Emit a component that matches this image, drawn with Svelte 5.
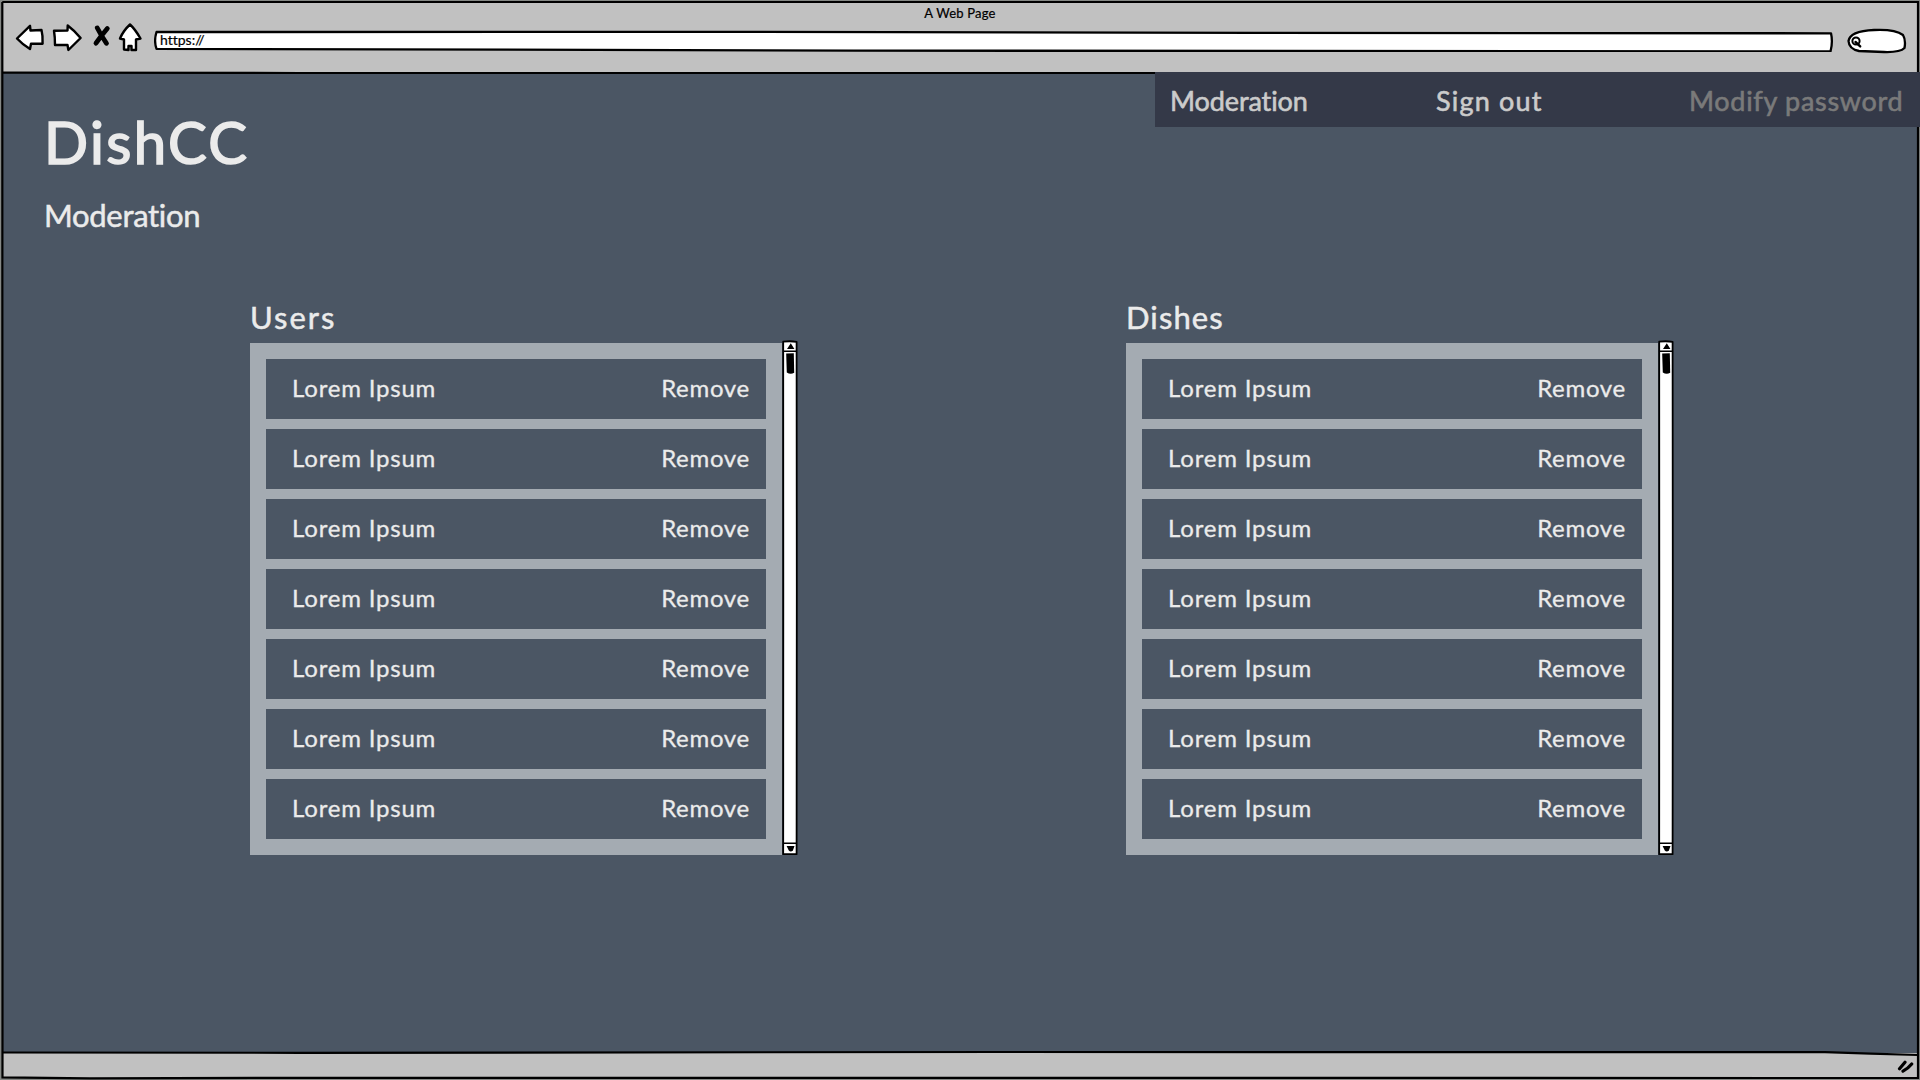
<script>
  const lists = ['Users', 'Dishes'];
  const rows = Array.from({ length: 7 }, () => 'Lorem Ipsum');
</script>

<div class="window">
  <header class="chrome">
    <div class="title">A Web Page</div>
    <div class="tools">
      <svg class="nav-icons" width="144" height="36" viewBox="0 0 144 36">
        <g fill="#fff" stroke="#000" stroke-width="2.4" stroke-linejoin="round" stroke-linecap="round">
          <path d="M17 19.5 L30 6.8 L30.5 11.5 L41.5 11 Q43 17 42.6 24.7 L31 24.7 L30 30 Q22 25 17 19.5Z" />
          <path d="M54 11.8 L67.5 11.5 L67.7 6.5 Q75 12 80.6 19 L68.4 31 L67.5 26 L55 26 Q55 18 54 11.8Z" />
          <path d="M130 5.5 Q135 10 140.5 19.5 L136 20.5 L136 31 L131.5 31 L131.5 27 L128.5 27 L128.5 31 L124 30.5 L124 20.5 L120 19.5 Q123 12 130 5.5Z" />
        </g>
        <path d="M97.3 9 Q102 18 106.5 24.3 M107.3 9.5 Q101 17 96 24.2" fill="none" stroke="#000" stroke-width="4.8" stroke-linecap="round" />
      </svg>
      <div class="address">
        <svg width="1680" height="22" viewBox="0 0 1680 22">
          <path d="M2.5 2 L600 1.9 L1100 2.8 L1677 3.3 Q1679 12 1676.5 21.5 L700 20.6 L2.5 18.8 Q-.3 11 2.5 2Z" fill="#fff" stroke="#000" stroke-width="2.3" stroke-linejoin="round" />
        </svg>
        <span class="url">https://</span>
      </div>
      <svg class="search" width="62" height="28" viewBox="0 0 62 28">
        <path d="M2.5 13 Q4 3 28 2 Q49 1 57 7 Q60 12 58.5 20 Q54 24.5 38 24 L13 23 Q3 21 2.5 13Z" fill="#fff" stroke="#000" stroke-width="2.3" />
        <circle cx="10" cy="13" r="3.6" fill="none" stroke="#000" stroke-width="2" />
        <path d="M9.5 14 L14.2 18.4" stroke="#000" stroke-width="2.4" stroke-linecap="round" />
      </svg>
    </div>
  </header>

  <main class="page">
    <div class="top">
      <div class="heading">
        <h1>DishCC</h1>
        <h2>Moderation</h2>
      </div>
      <nav>
        <span class="moderation">Moderation</span>
        <span class="sign-out">Sign out</span>
        <span class="muted">Modify password</span>
      </nav>
    </div>

    <div class="lists">
      {#each lists as name}
        <section>
          <h3 class:wide={name === 'Users'}>{name}</h3>
          <div class="box">
            <div class="rows">
              {#each rows as label}
                <div class="row">
                  <span class="label">{label}</span>
                  <span class="remove">Remove</span>
                </div>
              {/each}
            </div>
            <svg class="scrollbar" width="16" height="516" viewBox="0 0 16 516">
              <path d="M1.2 1.7 Q8 .8 14.6 1.8 L14.8 250 L14.6 514.2 L1.2 514.2 L1.3 250Z" fill="#fff" stroke="#000" stroke-width="1.8" stroke-linejoin="round" />
              <path d="M1 11.3 H15 M1 503.3 H15" stroke="#000" stroke-width="1.6" />
              <path d="M8.8 3.3 L12.4 9 H5Z M4.6 506 H12.5 L10.8 510.8 Q8.5 512.5 6.8 510.5Z" fill="#000" />
              <path d="M4.2 13.5 L11.8 13.3 L12.2 32.8 Q8.5 35 4.8 32.5Z" fill="#000" />
            </svg>
          </div>
        </section>
      {/each}
    </div>
  </main>

  <footer>
    <svg width="18" height="14" viewBox="0 0 18 14">
      <path d="M3.5 8.8 L9 2.2 M7 11.2 Q12 8.5 15.7 4" fill="none" stroke="#000" stroke-width="3.2" stroke-linecap="round" />
    </svg>
  </footer>

  <svg class="frame" width="1920" height="1080" viewBox="0 0 1920 1080">
    <g fill="none" stroke="#000" stroke-width="2.2">
      <path d="M2.3 2 H1918 L1918 72 M1918 127 V1078 L300 1077.8 L90 1078.3 L2.5 1077.3 L2.3 2" />
      <path d="M2 72.6 L300 73 L1155 73" />
      <path d="M2 1052.5 L300 1052.8 L1000 1052 L1825 1052.2 Q1870 1054 1918 1055" />
    </g>
  </svg>
</div>

<style>
  :global(body) { margin: 0; background: #7e827e; }
  .window {
    position: relative;
    width: 1920px;
    height: 1080px;
    display: flex;
    flex-direction: column;
    overflow: hidden;
    background: #858885;
    font-family: Lato, "Open Sans", sans-serif;
    font-variant-ligatures: none;
    color: #ebebeb;
  }
  .frame { position: absolute; inset: 0; pointer-events: none; }
  .chrome { height: 70px; margin: 2px 2px 0; background: #c1c1c1; color: #000; }
  .title { height: 22px; line-height: 22px; text-align: center; font-size: 13px; letter-spacing: 0.2px; -webkit-text-stroke: 0.2px #000; }
  .tools { display: flex; margin-left: -2px; }
  .nav-icons { margin-right: 10px; margin-top: -5px; }
  .address { display: flex; position: relative; margin-top: 6px; }
  .url { position: absolute; left: 6px; top: 0; line-height: 19px; font-size: 14px; -webkit-text-stroke: 0.2px #000; }
  .search { margin-left: 12px; margin-top: 4px; }
  .page { flex: 1; margin: 0 2px; background: #4b5664; }
  .top { display: flex; justify-content: space-between; margin-right: -2px; height: 227px; }
  .heading { padding-left: 42px; }
  h1, h2, h3 { margin: 0; font-weight: 400; white-space: nowrap; }
  h1 { margin-top: 33px; height: 74px; line-height: 74px; font-size: 58px; letter-spacing: 2.4px; -webkit-text-stroke: 1.6px #ebebeb; }
  h2 { margin-top: 16px; line-height: 40px; font-size: 31px; letter-spacing: -0.3px; -webkit-text-stroke: 0.5px #ebebeb; }
  nav {
    display: grid;
    grid-template-columns: 266px 253px 1fr;
    box-sizing: border-box;
    width: 765px;
    height: 55px;
    padding-left: 15px;
    line-height: 58px;
    font-size: 27px;
    color: #cbcbcb;
    background: #343948;
    white-space: nowrap;
    -webkit-text-stroke: 0.6px currentColor;
  }
  .moderation { letter-spacing: -0.1px; }
  .sign-out { letter-spacing: 1.2px; }
  .muted { color: #7a7a7a; letter-spacing: 0.7px; }
  .lists { display: flex; gap: 329px; padding-left: 248px; }
  section { width: 547px; }
  h3 { height: 44px; line-height: 36px; font-size: 31px; letter-spacing: 1.1px; -webkit-text-stroke: 0.5px #ebebeb; }
  h3.wide { letter-spacing: 2px; }
  .box { display: flex; align-items: flex-start; }
  .rows { display: grid; gap: 10px; width: 500px; padding: 16px; background: #a4abb2; }
  .row {
    display: flex;
    justify-content: space-between;
    box-sizing: border-box;
    height: 60px;
    padding: 0 16px 0 26px;
    line-height: 58px;
    font-size: 24px;
    background: #4b5664;
    -webkit-text-stroke: 0.3px #ebebeb;
  }
  .label { letter-spacing: 0.8px; }
  .remove { letter-spacing: 0.7px; }
  .scrollbar { margin-top: -3px; margin-right: -1px; flex: none; }
  footer { height: 25px; margin: 0 2px 2px; display: flex; justify-content: flex-end; background: #c1c1c1; }
  footer svg { margin: 7px 4px 0 0; }
</style>
